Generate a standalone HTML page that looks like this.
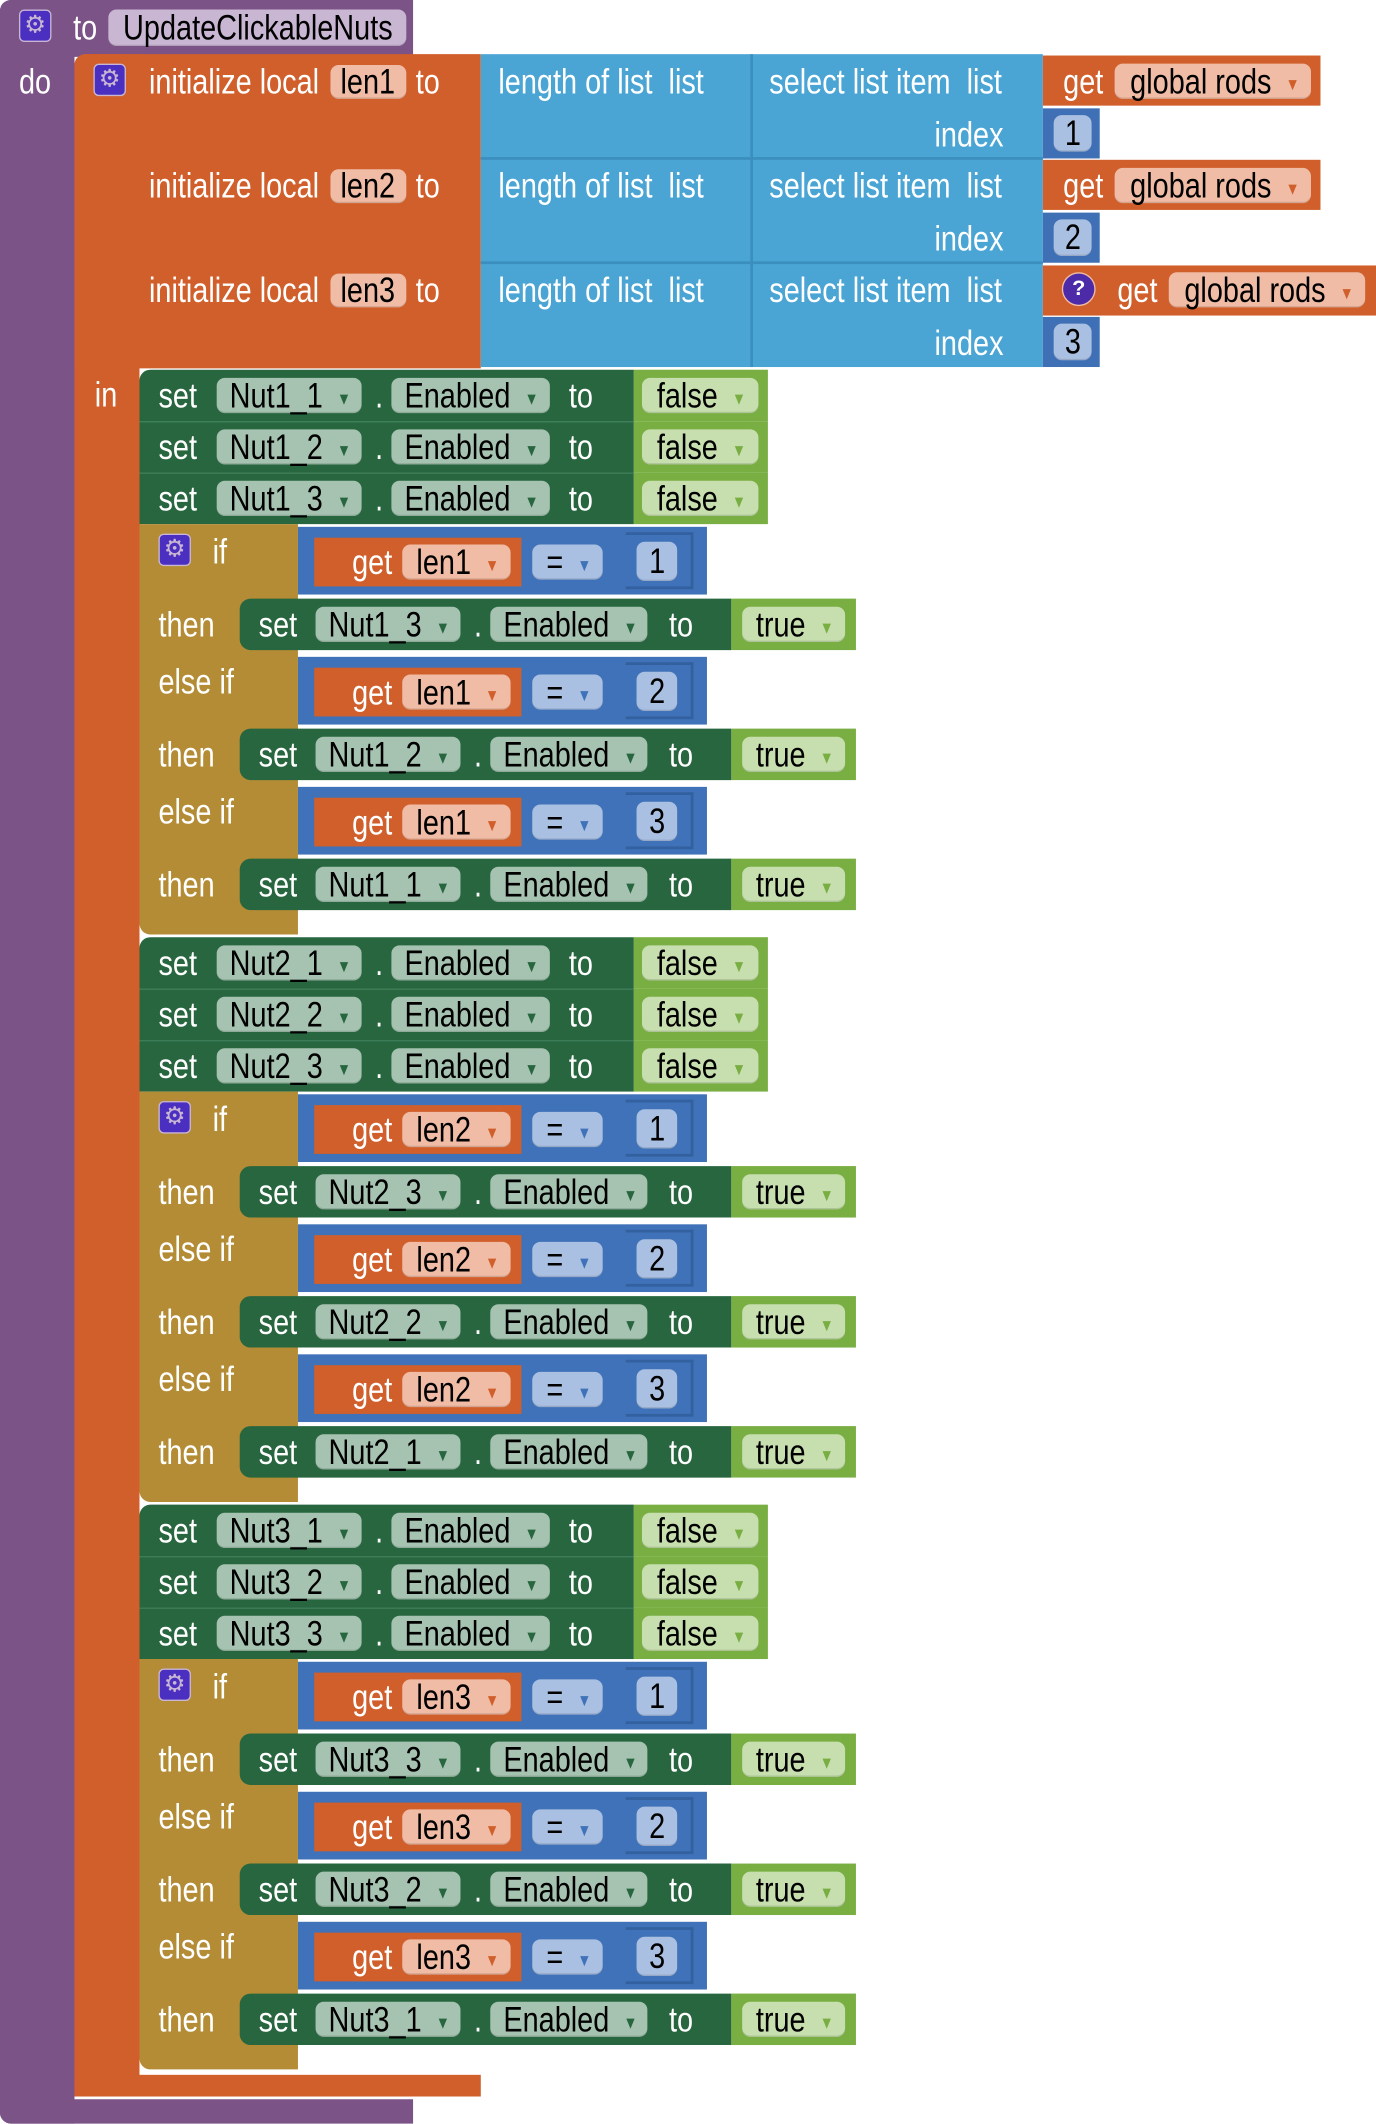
<!DOCTYPE html>
<html><head><meta charset="utf-8"><style>
html,body{margin:0;padding:0;background:#fff;width:1376px;height:2124px;overflow:hidden}
#w{position:relative;width:1016px;height:1568px;transform:scale(1.35433);transform-origin:0 0;font-family:"Liberation Sans",sans-serif}
.r{position:absolute}
.g{position:absolute;left:0;width:1016px;height:420px}
.tx{position:absolute;color:#fff;font-size:26px;line-height:30px;height:30px;white-space:nowrap;transform:scaleX(.82);transform-origin:left center}
.p{position:absolute;border-radius:6px;display:flex;align-items:center;justify-content:center;font-size:26px;color:#000;white-space:nowrap;box-shadow:inset 0 -1px 0 rgba(0,0,0,.12)}
.p span{display:inline-block;transform:scaleX(.82)}
.p b{font-weight:normal;font-size:15px;margin-left:8px;vertical-align:middle}
.dg{background:#27663f}.lg{background:#78ae42}.bl{background:#3f72b8}.or{background:#d15f2b}.lb{background:#4aa5d5}.oc{background:#b38c35}.pu{background:#7b5386}
.gp{background:#a6c3b1}.gp b{color:#27663f}
.lp{background:#c7dfae}.lp b{color:#78ae42}
.op{background:#f0bca5}.op b{color:#d15f2b}
.bp{background:#aac0e2}.bp b{color:#3f72b8}
.gear{position:absolute;width:24px;height:24px;border-radius:4px;background:#4a2fc0;border:1px solid #c9b6d3;box-sizing:border-box;color:#c9b6d3;font-size:18px;line-height:22px;text-align:center;font-family:"DejaVu Sans",sans-serif}
.num{position:absolute;border:2px solid #33609e;box-sizing:border-box;border-left:none}
</style></head><body><div id="w">
<!-- purple procedure -->
<div class="r pu" style="left:0;top:0;width:305px;height:42px;border-radius:8px 0 0 0"></div>
<div class="r pu" style="left:0;top:0;width:55px;height:1568px;border-radius:8px 0 0 8px"></div>
<div class="r pu" style="left:0;top:1550px;width:305px;height:18px;border-radius:0 0 0 8px"></div>
<div class="gear" style="left:14px;top:7px">⚙</div>
<div class="tx" style="left:54px;top:5px">to</div>
<div class="p" style="left:80px;top:7px;width:220px;height:27px;background:#c9b6d3"><span>UpdateClickableNuts</span></div>
<div class="tx" style="left:14px;top:45px">do</div>
<!-- orange local -->
<div class="r or" style="left:55px;top:40px;width:300px;height:232px;border-radius:8px 0 0 0"></div>
<div class="r or" style="left:55px;top:40px;width:48px;height:1508px;border-radius:8px 0 0 8px"></div>
<div class="r or" style="left:55px;top:1532px;width:300px;height:16px"></div>
<div class="gear" style="left:69px;top:47px">⚙</div>
<div class="tx" style="left:110px;top:45px">initialize local</div>
<div class="tx" style="left:110px;top:122px">initialize local</div>
<div class="tx" style="left:110px;top:199px">initialize local</div>
<div class="p op" style="left:244px;top:48px;width:56px;height:25px"><span>len1</span></div>
<div class="p op" style="left:244px;top:125px;width:56px;height:25px"><span>len2</span></div>
<div class="p op" style="left:244px;top:202px;width:56px;height:25px"><span>len3</span></div>
<div class="tx" style="left:307px;top:45px">to</div>
<div class="tx" style="left:307px;top:122px">to</div>
<div class="tx" style="left:307px;top:199px">to</div>
<div class="tx" style="left:70px;top:276px">in</div>
<!-- list blocks -->
<div class="r lb" style="left:355px;top:40px;width:415px;height:231px"></div>
<div class="r" style="left:355px;top:116px;width:415px;height:2px;background:#3b8fbf"></div>
<div class="r" style="left:355px;top:193px;width:415px;height:2px;background:#3b8fbf"></div>
<div class="r" style="left:554px;top:40px;width:2px;height:231px;background:#3b8fbf"></div>
<div class="tx" style="left:368px;top:45px">length of list&nbsp; list</div>
<div class="tx" style="left:368px;top:122px">length of list&nbsp; list</div>
<div class="tx" style="left:368px;top:199px">length of list&nbsp; list</div>
<div class="tx" style="left:568px;top:45px">select list item&nbsp; list</div>
<div class="tx" style="left:568px;top:122px">select list item&nbsp; list</div>
<div class="tx" style="left:568px;top:199px">select list item&nbsp; list</div>
<div class="tx" style="left:690px;top:84px">index</div>
<div class="tx" style="left:690px;top:161px">index</div>
<div class="tx" style="left:690px;top:238px">index</div>
<div class="r or" style="left:770px;top:41px;width:205px;height:37px"></div>
<div class="tx" style="left:785px;top:45px">get</div>
<div class="p op" style="left:823px;top:47px;width:145px;height:26px"><span>global rods <b>▾</b></span></div>
<div class="r or" style="left:770px;top:118px;width:205px;height:37px"></div>
<div class="tx" style="left:785px;top:122px">get</div>
<div class="p op" style="left:823px;top:124px;width:145px;height:26px"><span>global rods <b>▾</b></span></div>
<div class="r or" style="left:770px;top:196px;width:246px;height:37px"></div>
<div class="r" style="left:784px;top:201px;width:25px;height:25px;border-radius:50%;background:#4d2aa7;border:1px solid #f0bca5;box-sizing:border-box;color:#fff;font-size:16px;line-height:23px;text-align:center;font-weight:bold">?</div>
<div class="tx" style="left:825px;top:199px">get</div>
<div class="p op" style="left:863px;top:201px;width:145px;height:26px"><span>global rods <b>▾</b></span></div>
<div class="r" style="left:770px;top:80px;width:42px;height:37px;background:#3f6fb5"></div>
<div class="p bp" style="left:778px;top:85px;width:28px;height:27px"><span>1</span></div>
<div class="r" style="left:770px;top:157px;width:42px;height:37px;background:#3f6fb5"></div>
<div class="p bp" style="left:778px;top:162px;width:28px;height:27px"><span>2</span></div>
<div class="r" style="left:770px;top:234px;width:42px;height:37px;background:#3f6fb5"></div>
<div class="p bp" style="left:778px;top:239px;width:28px;height:27px"><span>3</span></div>

<!-- GROUP 1 -->
<div class="g" style="top:273px">
<div class="r dg" style="left:103px;top:0;width:365px;height:38px;border-radius:8px 0 0 0"></div><div class="r lg" style="left:468px;top:0;width:99px;height:38px"></div>
<div class="tx" style="left:117px;top:4px">set</div><div class="p gp" style="left:160px;top:6px;width:107px;height:26px"><span>Nut1_1 <b>▾</b></span></div><div class="tx" style="left:277px;top:4px">.</div><div class="p gp" style="left:289px;top:6px;width:117px;height:26px"><span>Enabled <b>▾</b></span></div><div class="tx" style="left:420px;top:4px">to</div><div class="p lp" style="left:474px;top:6px;width:86px;height:26px"><span>false <b>▾</b></span></div>
<div class="r dg" style="left:103px;top:38px;width:365px;height:38px;border-top:1px solid #3b7c55;box-sizing:border-box"></div><div class="r lg" style="left:468px;top:38px;width:99px;height:38px"></div>
<div class="tx" style="left:117px;top:42px">set</div><div class="p gp" style="left:160px;top:44px;width:107px;height:26px"><span>Nut1_2 <b>▾</b></span></div><div class="tx" style="left:277px;top:42px">.</div><div class="p gp" style="left:289px;top:44px;width:117px;height:26px"><span>Enabled <b>▾</b></span></div><div class="tx" style="left:420px;top:42px">to</div><div class="p lp" style="left:474px;top:44px;width:86px;height:26px"><span>false <b>▾</b></span></div>
<div class="r dg" style="left:103px;top:76px;width:365px;height:38px;border-top:1px solid #3b7c55;box-sizing:border-box"></div><div class="r lg" style="left:468px;top:76px;width:99px;height:38px"></div>
<div class="tx" style="left:117px;top:80px">set</div><div class="p gp" style="left:160px;top:82px;width:107px;height:26px"><span>Nut1_3 <b>▾</b></span></div><div class="tx" style="left:277px;top:80px">.</div><div class="p gp" style="left:289px;top:82px;width:117px;height:26px"><span>Enabled <b>▾</b></span></div><div class="tx" style="left:420px;top:80px">to</div><div class="p lp" style="left:474px;top:82px;width:86px;height:26px"><span>false <b>▾</b></span></div>
<div class="r oc" style="left:103px;top:114px;width:117px;height:303px;border-radius:0 0 0 8px"></div>
<div class="gear" style="left:117px;top:121px">⚙</div><div class="tx" style="left:157px;top:119px">if</div>
<div class="tx" style="left:117px;top:173px">then</div><div class="tx" style="left:117px;top:215px">else if</div><div class="tx" style="left:117px;top:269px">then</div><div class="tx" style="left:117px;top:311px">else if</div><div class="tx" style="left:117px;top:365px">then</div>
<div class="r bl" style="left:220px;top:116px;width:302px;height:50px"></div><div class="r or" style="left:232px;top:124px;width:153px;height:36px"></div><div class="tx" style="left:260px;top:127px">get</div><div class="p op" style="left:297px;top:129px;width:80px;height:26px"><span>len1 <b>▾</b></span></div><div class="p bp" style="left:393px;top:129px;width:52px;height:26px"><span>= <b>▾</b></span></div><div class="num" style="left:462px;top:120px;width:50px;height:42px"></div><div class="p bp" style="left:470px;top:127px;width:30px;height:29px"><span>1</span></div>
<div class="r dg" style="left:177px;top:169px;width:363px;height:38px;border-radius:8px 0 0 8px"></div><div class="r lg" style="left:540px;top:169px;width:92px;height:38px"></div><div class="tx" style="left:191px;top:173px">set</div><div class="p gp" style="left:233px;top:175px;width:107px;height:26px"><span>Nut1_3 <b>▾</b></span></div><div class="tx" style="left:350px;top:173px">.</div><div class="p gp" style="left:362px;top:175px;width:116px;height:26px"><span>Enabled <b>▾</b></span></div><div class="tx" style="left:494px;top:173px">to</div><div class="p lp" style="left:548px;top:175px;width:76px;height:26px"><span>true <b>▾</b></span></div>
<div class="r bl" style="left:220px;top:212px;width:302px;height:50px"></div><div class="r or" style="left:232px;top:220px;width:153px;height:36px"></div><div class="tx" style="left:260px;top:223px">get</div><div class="p op" style="left:297px;top:225px;width:80px;height:26px"><span>len1 <b>▾</b></span></div><div class="p bp" style="left:393px;top:225px;width:52px;height:26px"><span>= <b>▾</b></span></div><div class="num" style="left:462px;top:216px;width:50px;height:42px"></div><div class="p bp" style="left:470px;top:223px;width:30px;height:29px"><span>2</span></div>
<div class="r dg" style="left:177px;top:265px;width:363px;height:38px;border-radius:8px 0 0 8px"></div><div class="r lg" style="left:540px;top:265px;width:92px;height:38px"></div><div class="tx" style="left:191px;top:269px">set</div><div class="p gp" style="left:233px;top:271px;width:107px;height:26px"><span>Nut1_2 <b>▾</b></span></div><div class="tx" style="left:350px;top:269px">.</div><div class="p gp" style="left:362px;top:271px;width:116px;height:26px"><span>Enabled <b>▾</b></span></div><div class="tx" style="left:494px;top:269px">to</div><div class="p lp" style="left:548px;top:271px;width:76px;height:26px"><span>true <b>▾</b></span></div>
<div class="r bl" style="left:220px;top:308px;width:302px;height:50px"></div><div class="r or" style="left:232px;top:316px;width:153px;height:36px"></div><div class="tx" style="left:260px;top:319px">get</div><div class="p op" style="left:297px;top:321px;width:80px;height:26px"><span>len1 <b>▾</b></span></div><div class="p bp" style="left:393px;top:321px;width:52px;height:26px"><span>= <b>▾</b></span></div><div class="num" style="left:462px;top:312px;width:50px;height:42px"></div><div class="p bp" style="left:470px;top:319px;width:30px;height:29px"><span>3</span></div>
<div class="r dg" style="left:177px;top:361px;width:363px;height:38px;border-radius:8px 0 0 8px"></div><div class="r lg" style="left:540px;top:361px;width:92px;height:38px"></div><div class="tx" style="left:191px;top:365px">set</div><div class="p gp" style="left:233px;top:367px;width:107px;height:26px"><span>Nut1_1 <b>▾</b></span></div><div class="tx" style="left:350px;top:365px">.</div><div class="p gp" style="left:362px;top:367px;width:116px;height:26px"><span>Enabled <b>▾</b></span></div><div class="tx" style="left:494px;top:365px">to</div><div class="p lp" style="left:548px;top:367px;width:76px;height:26px"><span>true <b>▾</b></span></div>
</div>

<!-- GROUP 2 -->
<div class="g" style="top:692px">
<div class="r dg" style="left:103px;top:0;width:365px;height:38px;border-radius:8px 0 0 0"></div><div class="r lg" style="left:468px;top:0;width:99px;height:38px"></div>
<div class="tx" style="left:117px;top:4px">set</div><div class="p gp" style="left:160px;top:6px;width:107px;height:26px"><span>Nut2_1 <b>▾</b></span></div><div class="tx" style="left:277px;top:4px">.</div><div class="p gp" style="left:289px;top:6px;width:117px;height:26px"><span>Enabled <b>▾</b></span></div><div class="tx" style="left:420px;top:4px">to</div><div class="p lp" style="left:474px;top:6px;width:86px;height:26px"><span>false <b>▾</b></span></div>
<div class="r dg" style="left:103px;top:38px;width:365px;height:38px;border-top:1px solid #3b7c55;box-sizing:border-box"></div><div class="r lg" style="left:468px;top:38px;width:99px;height:38px"></div>
<div class="tx" style="left:117px;top:42px">set</div><div class="p gp" style="left:160px;top:44px;width:107px;height:26px"><span>Nut2_2 <b>▾</b></span></div><div class="tx" style="left:277px;top:42px">.</div><div class="p gp" style="left:289px;top:44px;width:117px;height:26px"><span>Enabled <b>▾</b></span></div><div class="tx" style="left:420px;top:42px">to</div><div class="p lp" style="left:474px;top:44px;width:86px;height:26px"><span>false <b>▾</b></span></div>
<div class="r dg" style="left:103px;top:76px;width:365px;height:38px;border-top:1px solid #3b7c55;box-sizing:border-box"></div><div class="r lg" style="left:468px;top:76px;width:99px;height:38px"></div>
<div class="tx" style="left:117px;top:80px">set</div><div class="p gp" style="left:160px;top:82px;width:107px;height:26px"><span>Nut2_3 <b>▾</b></span></div><div class="tx" style="left:277px;top:80px">.</div><div class="p gp" style="left:289px;top:82px;width:117px;height:26px"><span>Enabled <b>▾</b></span></div><div class="tx" style="left:420px;top:80px">to</div><div class="p lp" style="left:474px;top:82px;width:86px;height:26px"><span>false <b>▾</b></span></div>
<div class="r oc" style="left:103px;top:114px;width:117px;height:303px;border-radius:0 0 0 8px"></div>
<div class="gear" style="left:117px;top:121px">⚙</div><div class="tx" style="left:157px;top:119px">if</div>
<div class="tx" style="left:117px;top:173px">then</div><div class="tx" style="left:117px;top:215px">else if</div><div class="tx" style="left:117px;top:269px">then</div><div class="tx" style="left:117px;top:311px">else if</div><div class="tx" style="left:117px;top:365px">then</div>
<div class="r bl" style="left:220px;top:116px;width:302px;height:50px"></div><div class="r or" style="left:232px;top:124px;width:153px;height:36px"></div><div class="tx" style="left:260px;top:127px">get</div><div class="p op" style="left:297px;top:129px;width:80px;height:26px"><span>len2 <b>▾</b></span></div><div class="p bp" style="left:393px;top:129px;width:52px;height:26px"><span>= <b>▾</b></span></div><div class="num" style="left:462px;top:120px;width:50px;height:42px"></div><div class="p bp" style="left:470px;top:127px;width:30px;height:29px"><span>1</span></div>
<div class="r dg" style="left:177px;top:169px;width:363px;height:38px;border-radius:8px 0 0 8px"></div><div class="r lg" style="left:540px;top:169px;width:92px;height:38px"></div><div class="tx" style="left:191px;top:173px">set</div><div class="p gp" style="left:233px;top:175px;width:107px;height:26px"><span>Nut2_3 <b>▾</b></span></div><div class="tx" style="left:350px;top:173px">.</div><div class="p gp" style="left:362px;top:175px;width:116px;height:26px"><span>Enabled <b>▾</b></span></div><div class="tx" style="left:494px;top:173px">to</div><div class="p lp" style="left:548px;top:175px;width:76px;height:26px"><span>true <b>▾</b></span></div>
<div class="r bl" style="left:220px;top:212px;width:302px;height:50px"></div><div class="r or" style="left:232px;top:220px;width:153px;height:36px"></div><div class="tx" style="left:260px;top:223px">get</div><div class="p op" style="left:297px;top:225px;width:80px;height:26px"><span>len2 <b>▾</b></span></div><div class="p bp" style="left:393px;top:225px;width:52px;height:26px"><span>= <b>▾</b></span></div><div class="num" style="left:462px;top:216px;width:50px;height:42px"></div><div class="p bp" style="left:470px;top:223px;width:30px;height:29px"><span>2</span></div>
<div class="r dg" style="left:177px;top:265px;width:363px;height:38px;border-radius:8px 0 0 8px"></div><div class="r lg" style="left:540px;top:265px;width:92px;height:38px"></div><div class="tx" style="left:191px;top:269px">set</div><div class="p gp" style="left:233px;top:271px;width:107px;height:26px"><span>Nut2_2 <b>▾</b></span></div><div class="tx" style="left:350px;top:269px">.</div><div class="p gp" style="left:362px;top:271px;width:116px;height:26px"><span>Enabled <b>▾</b></span></div><div class="tx" style="left:494px;top:269px">to</div><div class="p lp" style="left:548px;top:271px;width:76px;height:26px"><span>true <b>▾</b></span></div>
<div class="r bl" style="left:220px;top:308px;width:302px;height:50px"></div><div class="r or" style="left:232px;top:316px;width:153px;height:36px"></div><div class="tx" style="left:260px;top:319px">get</div><div class="p op" style="left:297px;top:321px;width:80px;height:26px"><span>len2 <b>▾</b></span></div><div class="p bp" style="left:393px;top:321px;width:52px;height:26px"><span>= <b>▾</b></span></div><div class="num" style="left:462px;top:312px;width:50px;height:42px"></div><div class="p bp" style="left:470px;top:319px;width:30px;height:29px"><span>3</span></div>
<div class="r dg" style="left:177px;top:361px;width:363px;height:38px;border-radius:8px 0 0 8px"></div><div class="r lg" style="left:540px;top:361px;width:92px;height:38px"></div><div class="tx" style="left:191px;top:365px">set</div><div class="p gp" style="left:233px;top:367px;width:107px;height:26px"><span>Nut2_1 <b>▾</b></span></div><div class="tx" style="left:350px;top:365px">.</div><div class="p gp" style="left:362px;top:367px;width:116px;height:26px"><span>Enabled <b>▾</b></span></div><div class="tx" style="left:494px;top:365px">to</div><div class="p lp" style="left:548px;top:367px;width:76px;height:26px"><span>true <b>▾</b></span></div>
</div>

<!-- GROUP 3 -->
<div class="g" style="top:1111px">
<div class="r dg" style="left:103px;top:0;width:365px;height:38px;border-radius:8px 0 0 0"></div><div class="r lg" style="left:468px;top:0;width:99px;height:38px"></div>
<div class="tx" style="left:117px;top:4px">set</div><div class="p gp" style="left:160px;top:6px;width:107px;height:26px"><span>Nut3_1 <b>▾</b></span></div><div class="tx" style="left:277px;top:4px">.</div><div class="p gp" style="left:289px;top:6px;width:117px;height:26px"><span>Enabled <b>▾</b></span></div><div class="tx" style="left:420px;top:4px">to</div><div class="p lp" style="left:474px;top:6px;width:86px;height:26px"><span>false <b>▾</b></span></div>
<div class="r dg" style="left:103px;top:38px;width:365px;height:38px;border-top:1px solid #3b7c55;box-sizing:border-box"></div><div class="r lg" style="left:468px;top:38px;width:99px;height:38px"></div>
<div class="tx" style="left:117px;top:42px">set</div><div class="p gp" style="left:160px;top:44px;width:107px;height:26px"><span>Nut3_2 <b>▾</b></span></div><div class="tx" style="left:277px;top:42px">.</div><div class="p gp" style="left:289px;top:44px;width:117px;height:26px"><span>Enabled <b>▾</b></span></div><div class="tx" style="left:420px;top:42px">to</div><div class="p lp" style="left:474px;top:44px;width:86px;height:26px"><span>false <b>▾</b></span></div>
<div class="r dg" style="left:103px;top:76px;width:365px;height:38px;border-top:1px solid #3b7c55;box-sizing:border-box"></div><div class="r lg" style="left:468px;top:76px;width:99px;height:38px"></div>
<div class="tx" style="left:117px;top:80px">set</div><div class="p gp" style="left:160px;top:82px;width:107px;height:26px"><span>Nut3_3 <b>▾</b></span></div><div class="tx" style="left:277px;top:80px">.</div><div class="p gp" style="left:289px;top:82px;width:117px;height:26px"><span>Enabled <b>▾</b></span></div><div class="tx" style="left:420px;top:80px">to</div><div class="p lp" style="left:474px;top:82px;width:86px;height:26px"><span>false <b>▾</b></span></div>
<div class="r oc" style="left:103px;top:114px;width:117px;height:303px;border-radius:0 0 0 8px"></div>
<div class="gear" style="left:117px;top:121px">⚙</div><div class="tx" style="left:157px;top:119px">if</div>
<div class="tx" style="left:117px;top:173px">then</div><div class="tx" style="left:117px;top:215px">else if</div><div class="tx" style="left:117px;top:269px">then</div><div class="tx" style="left:117px;top:311px">else if</div><div class="tx" style="left:117px;top:365px">then</div>
<div class="r bl" style="left:220px;top:116px;width:302px;height:50px"></div><div class="r or" style="left:232px;top:124px;width:153px;height:36px"></div><div class="tx" style="left:260px;top:127px">get</div><div class="p op" style="left:297px;top:129px;width:80px;height:26px"><span>len3 <b>▾</b></span></div><div class="p bp" style="left:393px;top:129px;width:52px;height:26px"><span>= <b>▾</b></span></div><div class="num" style="left:462px;top:120px;width:50px;height:42px"></div><div class="p bp" style="left:470px;top:127px;width:30px;height:29px"><span>1</span></div>
<div class="r dg" style="left:177px;top:169px;width:363px;height:38px;border-radius:8px 0 0 8px"></div><div class="r lg" style="left:540px;top:169px;width:92px;height:38px"></div><div class="tx" style="left:191px;top:173px">set</div><div class="p gp" style="left:233px;top:175px;width:107px;height:26px"><span>Nut3_3 <b>▾</b></span></div><div class="tx" style="left:350px;top:173px">.</div><div class="p gp" style="left:362px;top:175px;width:116px;height:26px"><span>Enabled <b>▾</b></span></div><div class="tx" style="left:494px;top:173px">to</div><div class="p lp" style="left:548px;top:175px;width:76px;height:26px"><span>true <b>▾</b></span></div>
<div class="r bl" style="left:220px;top:212px;width:302px;height:50px"></div><div class="r or" style="left:232px;top:220px;width:153px;height:36px"></div><div class="tx" style="left:260px;top:223px">get</div><div class="p op" style="left:297px;top:225px;width:80px;height:26px"><span>len3 <b>▾</b></span></div><div class="p bp" style="left:393px;top:225px;width:52px;height:26px"><span>= <b>▾</b></span></div><div class="num" style="left:462px;top:216px;width:50px;height:42px"></div><div class="p bp" style="left:470px;top:223px;width:30px;height:29px"><span>2</span></div>
<div class="r dg" style="left:177px;top:265px;width:363px;height:38px;border-radius:8px 0 0 8px"></div><div class="r lg" style="left:540px;top:265px;width:92px;height:38px"></div><div class="tx" style="left:191px;top:269px">set</div><div class="p gp" style="left:233px;top:271px;width:107px;height:26px"><span>Nut3_2 <b>▾</b></span></div><div class="tx" style="left:350px;top:269px">.</div><div class="p gp" style="left:362px;top:271px;width:116px;height:26px"><span>Enabled <b>▾</b></span></div><div class="tx" style="left:494px;top:269px">to</div><div class="p lp" style="left:548px;top:271px;width:76px;height:26px"><span>true <b>▾</b></span></div>
<div class="r bl" style="left:220px;top:308px;width:302px;height:50px"></div><div class="r or" style="left:232px;top:316px;width:153px;height:36px"></div><div class="tx" style="left:260px;top:319px">get</div><div class="p op" style="left:297px;top:321px;width:80px;height:26px"><span>len3 <b>▾</b></span></div><div class="p bp" style="left:393px;top:321px;width:52px;height:26px"><span>= <b>▾</b></span></div><div class="num" style="left:462px;top:312px;width:50px;height:42px"></div><div class="p bp" style="left:470px;top:319px;width:30px;height:29px"><span>3</span></div>
<div class="r dg" style="left:177px;top:361px;width:363px;height:38px;border-radius:8px 0 0 8px"></div><div class="r lg" style="left:540px;top:361px;width:92px;height:38px"></div><div class="tx" style="left:191px;top:365px">set</div><div class="p gp" style="left:233px;top:367px;width:107px;height:26px"><span>Nut3_1 <b>▾</b></span></div><div class="tx" style="left:350px;top:365px">.</div><div class="p gp" style="left:362px;top:367px;width:116px;height:26px"><span>Enabled <b>▾</b></span></div><div class="tx" style="left:494px;top:365px">to</div><div class="p lp" style="left:548px;top:367px;width:76px;height:26px"><span>true <b>▾</b></span></div>
</div>
</div></body></html>
